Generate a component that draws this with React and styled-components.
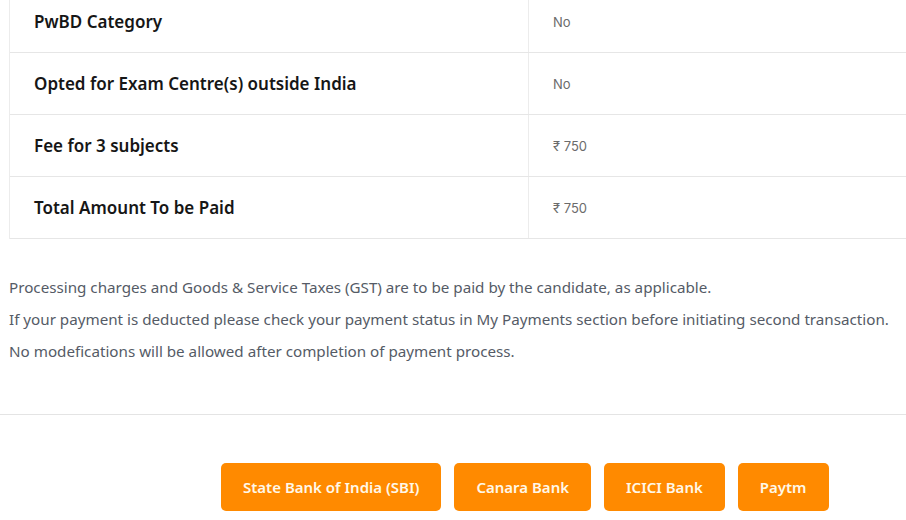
import React from 'react'
import styled, { createGlobalStyle } from 'styled-components'

const GlobalStyle = createGlobalStyle`
  body {
    margin: 0;
    background: #fff;
    font-family: "Noto Sans", "Open Sans", sans-serif;
  }
`

const rows = [
  { label: 'PwBD Category', value: 'No' },
  { label: 'Opted for Exam Centre(s) outside India', value: 'No' },
  { label: 'Fee for 3 subjects', value: '₹ 750' },
  { label: 'Total Amount To be Paid', value: '₹ 750' },
]

const notes = [
  'Processing charges and Goods & Service Taxes (GST) are to be paid by the candidate, as applicable.',
  'If your payment is deducted please check your payment status in My Payments section before initiating second transaction.',
  'No modefications will be allowed after completion of payment process.',
]

const banks = ['State Bank of India (SBI)', 'Canara Bank', 'ICICI Bank', 'Paytm']

const Page = styled.div`
  width: 906px;
  height: 520px;
  overflow: hidden;
`

const Table = styled.div`
  margin: -9px 0 0 9px;
  width: 1000px;
  border-left: 1px solid #ececec;
`

const Row = styled.div`
  display: grid;
  grid-template-columns: 519px 1fr;
  height: 62px;
  border-bottom: 1px solid #e6e6e6;
  box-sizing: border-box;
`

const Label = styled.div`
  display: flex;
  align-items: center;
  padding-left: 24px;
  border-right: 1px solid #ececec;
  font-size: 17px;
  font-weight: 600;
  color: #161616;
`

const Value = styled.div`
  display: flex;
  align-items: center;
  padding-left: 24px;
  font-family: Inter, Roboto, sans-serif;
  font-size: 13px;
  color: #6b6b6b;
`

const Notes = styled.div`
  padding: 32px 0 0 9px;
  height: 176px;
  box-sizing: border-box;
  border-bottom: 1px solid #e4e4e4;
`

const Note = styled.p`
  margin: 0;
  font-size: 15.2px;
  line-height: 32px;
  color: #555b66;
  white-space: nowrap;
`

const Buttons = styled.div`
  display: flex;
  gap: 13px;
  padding: 48px 0 0 221px;
`

const BankButton = styled.button`
  height: 48px;
  padding: 0 22px;
  border: none;
  border-radius: 5px;
  background: #ff8a00;
  color: #fff8e8;
  font-family: "Noto Sans", "Open Sans", sans-serif;
  font-size: 15px;
  font-weight: 600;
  cursor: pointer;
`

export default function App() {
  return (
    <Page>
      <GlobalStyle />
      <Table>
        {rows.map((r) => (
          <Row key={r.label}>
            <Label>{r.label}</Label>
            <Value>{r.value}</Value>
          </Row>
        ))}
      </Table>
      <Notes>
        {notes.map((n) => (
          <Note key={n}>{n}</Note>
        ))}
      </Notes>
      <Buttons>
        {banks.map((b) => (
          <BankButton key={b}>{b}</BankButton>
        ))}
      </Buttons>
    </Page>
  )
}
